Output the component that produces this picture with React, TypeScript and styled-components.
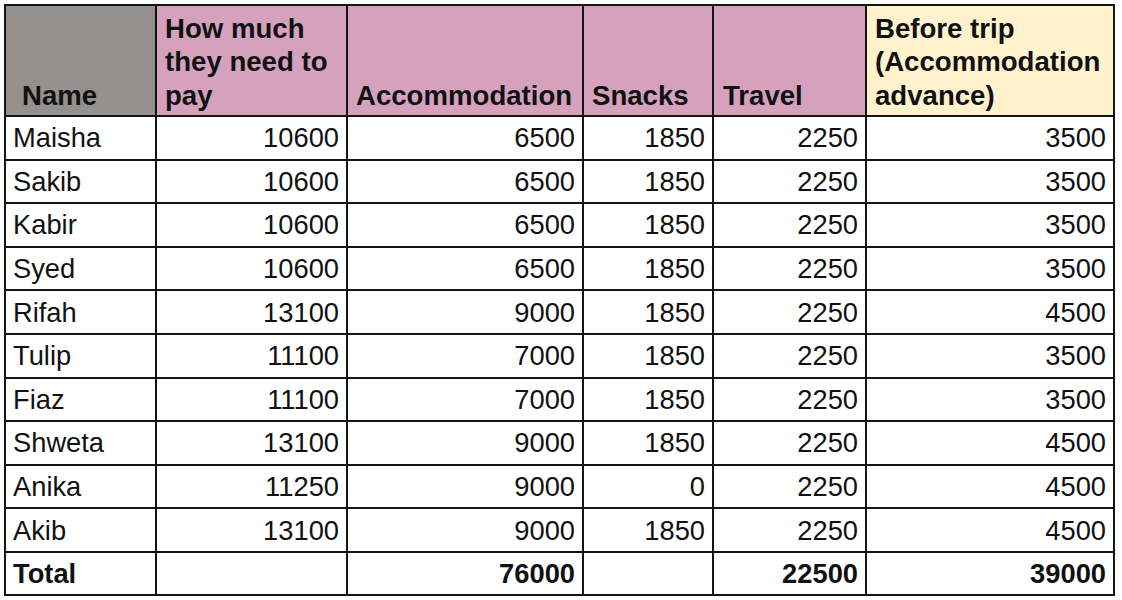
import React from 'react';
import styled, { createGlobalStyle } from 'styled-components';

const GlobalStyle = createGlobalStyle`
  body {
    margin: 0;
    background: #ffffff;
  }
`;

const Page = styled.div`
  padding: 4px;
  font-family: 'Liberation Sans', Arial, sans-serif;
  font-size: 27.3px;
  color: #111111;
`;

const Sheet = styled.div`
  display: grid;
  grid-template-columns: 151px 191px 236px 130px 153px 248px;
  grid-template-rows: 111px repeat(10, 43.6px) 43px;
  width: max-content;
  border-top: 2px solid #151515;
  border-left: 2px solid #151515;
`;

type Tone = 'gray' | 'pink' | 'yellow';

const tones: Record<Tone, string> = {
  gray: '#94908e',
  pink: '#d5a1bd',
  yellow: '#fff2cc',
};

const Cell = styled.div<{ $right?: boolean; $bold?: boolean }>`
  box-sizing: border-box;
  display: flex;
  align-items: center;
  justify-content: ${p => (p.$right ? 'flex-end' : 'flex-start')};
  padding: 1px 7px 0 7px;
  border-right: 2px solid #151515;
  border-bottom: 2px solid #151515;
  font-weight: ${p => (p.$bold ? 700 : 400)};
  white-space: nowrap;
  overflow: hidden;
`;

const HeadCell = styled.div<{ $tone: Tone; $indent?: number }>`
  box-sizing: border-box;
  display: flex;
  align-items: flex-end;
  padding: 0 6px 3px ${p => p.$indent ?? 8}px;
  background: ${p => tones[p.$tone]};
  border-right: 2px solid #151515;
  border-bottom: 2px solid #151515;
  font-size: 27.6px;
  font-weight: 700;
  line-height: 33.5px;
`;

const headers: { label: string; tone: Tone; indent?: number }[] = [
  { label: 'Name', tone: 'gray', indent: 16 },
  { label: 'How much they need to pay', tone: 'pink' },
  { label: 'Accommodation', tone: 'pink' },
  { label: 'Snacks', tone: 'pink' },
  { label: 'Travel', tone: 'pink', indent: 9 },
  { label: 'Before trip (Accommodation advance)', tone: 'yellow' },
];

const rows: [string, number, number, number, number, number][] = [
  ['Maisha', 10600, 6500, 1850, 2250, 3500],
  ['Sakib', 10600, 6500, 1850, 2250, 3500],
  ['Kabir', 10600, 6500, 1850, 2250, 3500],
  ['Syed', 10600, 6500, 1850, 2250, 3500],
  ['Rifah', 13100, 9000, 1850, 2250, 4500],
  ['Tulip', 11100, 7000, 1850, 2250, 3500],
  ['Fiaz', 11100, 7000, 1850, 2250, 3500],
  ['Shweta', 13100, 9000, 1850, 2250, 4500],
  ['Anika', 11250, 9000, 0, 2250, 4500],
  ['Akib', 13100, 9000, 1850, 2250, 4500],
];

const totals = ['Total', '', '76000', '', '22500', '39000'];

const App = () => {
  return (
    <Page>
      <GlobalStyle />
      <Sheet>
        {headers.map(h => (
          <HeadCell key={h.label} $tone={h.tone} $indent={h.indent}>
            {h.label}
          </HeadCell>
        ))}
        {rows.map(row =>
          row.map((value, i) => (
            <Cell key={`${row[0]}-${i}`} $right={i > 0}>
              {value}
            </Cell>
          ))
        )}
        {totals.map((value, i) => (
          <Cell key={`total-${i}`} $right={i > 0} $bold>
            {value}
          </Cell>
        ))}
      </Sheet>
    </Page>
  );
};

export default App;
